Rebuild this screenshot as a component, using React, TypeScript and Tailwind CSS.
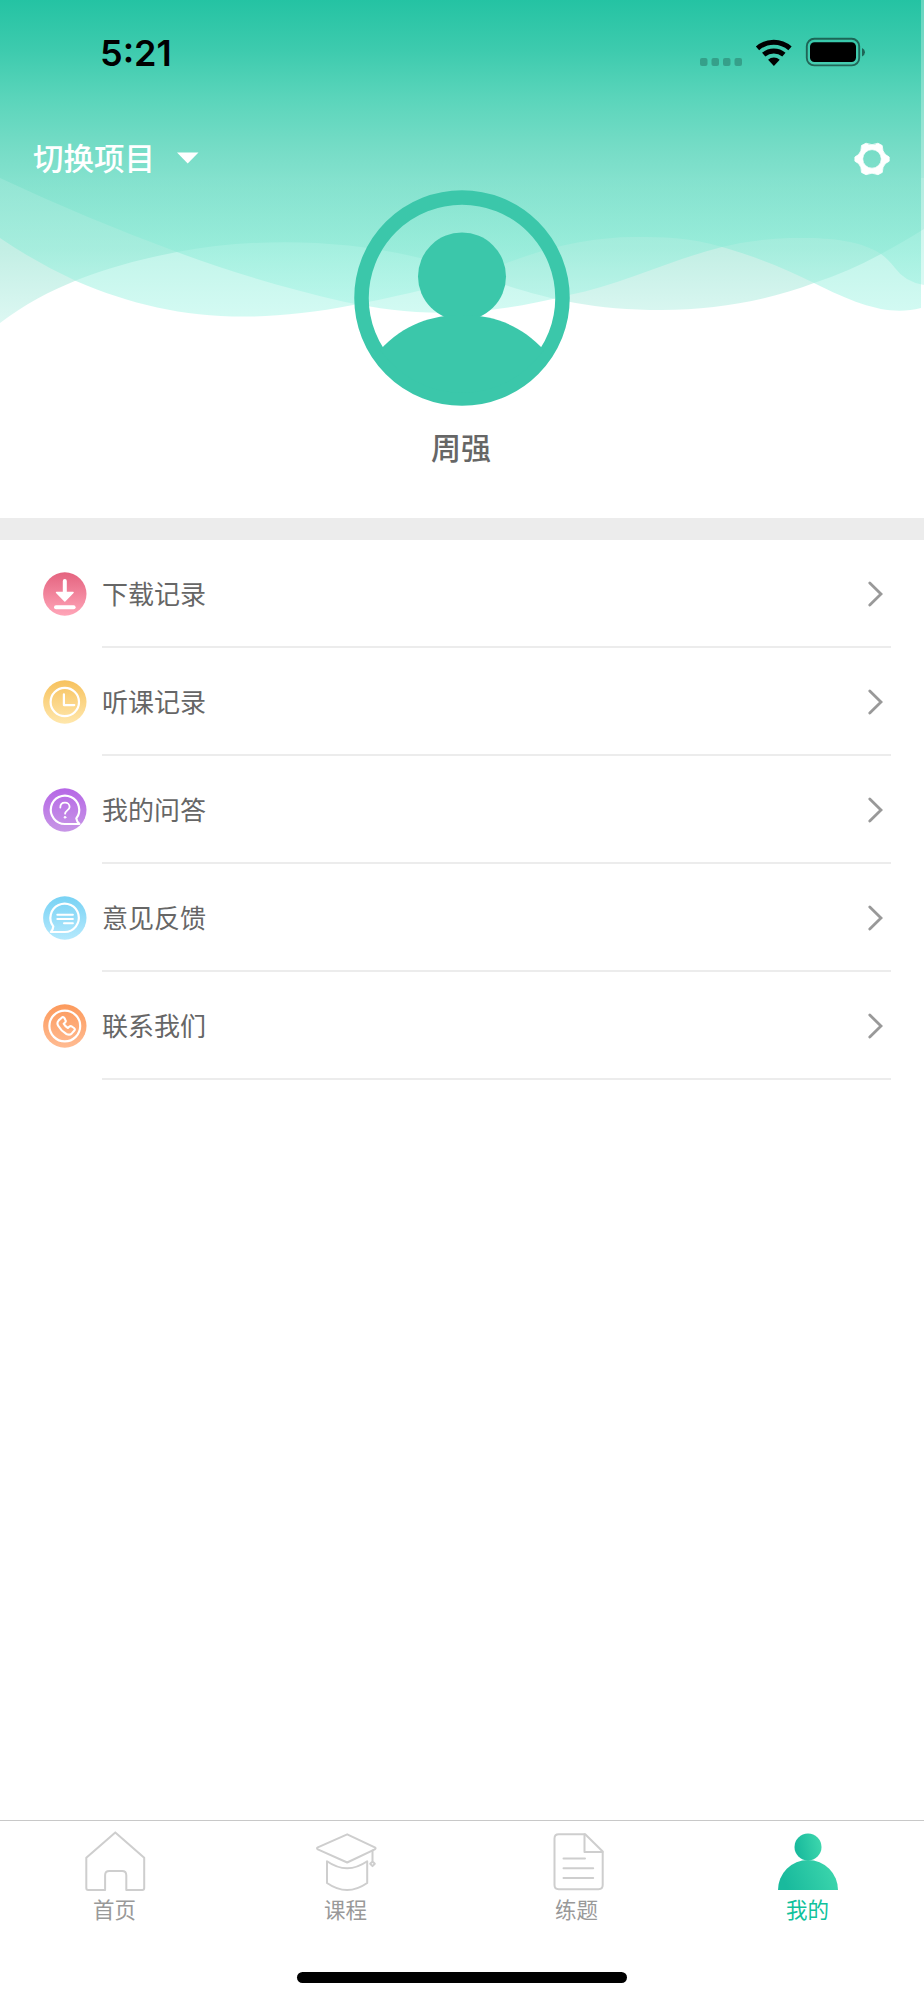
import type { ReactNode } from 'react';

interface MenuItem {
  label: string;
  from: string;
  to: string;
  glyph: ReactNode;
}

interface Tab {
  label: string;
  icon: ReactNode;
  active?: boolean;
}

const MENU: MenuItem[] = [
  {
    label: '下载记录',
    from: '#e4637f',
    to: '#ffa5b8',
    glyph: (
      <>
        <path d="M21.8 9v12" strokeWidth="4" />
        <path d="M13.500 20.500h16.600L21.800 29z" fill="#fff" strokeWidth="1.400" />
        <path d="M13 35.200h17.600" strokeWidth="4" />
      </>
    ),
  },
  {
    label: '听课记录',
    from: '#f7c25e',
    to: '#ffe7ac',
    glyph: (
      <>
        <circle cx="21.800" cy="22" r="14.200" strokeWidth="2.200" />
        <path d="M20.900 14.300v10.800h10.400" strokeWidth="2.200" />
      </>
    ),
  },
  {
    label: '我的问答',
    from: '#b667e6',
    to: '#c796e6',
    glyph: (
      <>
        <path
          d="M33.300 30.400A14.200 14.200 0 1 0 21.800 36h14.600c-1.500-1.100-2.700-3-3.100-5.600z"
          strokeWidth="2.200"
        />
        <path
          d="M17.300 19.600c0-3.300 2.100-5 4.700-5s4.600 1.800 4.600 4.300c0 3.300-4.500 3.600-4.500 6.800"
          strokeWidth="1.800"
        />
        <circle cx="22" cy="29.300" r="0.900" fill="#fff" strokeWidth="1" />
      </>
    ),
  },
  {
    label: '意见反馈',
    from: '#78d2f4',
    to: '#b5e9fd',
    glyph: (
      <>
        <path
          d="M10.300 30.400A14.200 14.200 0 1 1 21.800 36H7.800c1.400-1.100 2.300-3 2.500-5.600z"
          strokeWidth="2.200"
        />
        <path d="M14.300 18.700h15.600M14.300 23h15.600M21 27.300h8.900" strokeWidth="2" />
      </>
    ),
  },
  {
    label: '联系我们',
    from: '#fc9a5c',
    to: '#ffbb92',
    glyph: (
      <>
        <circle cx="21.800" cy="22" r="15.400" strokeWidth="2.200" />
        <path
          d="M19.300 13.200l-3.600 3.200c-1.500 1.500-1.600 3.400-.5 5.400 2 3.600 4.600 6.200 8.200 8.200 2 1 3.900.9 5.400-.6l2.400-2.600c1-1 .8-2-.2-2.800l-2.200-1.500c-1-.6-1.800-.4-2.600.3l-1.300 1.200c-1.600-.8-3.300-2.500-4.200-4.200l1.400-1.300c.8-.8.9-1.600.3-2.500l-1-1.900c-.6-.9-1.400-1.400-2.100-.9z"
          strokeWidth="2.100"
        />
      </>
    ),
  },
];

const TABS: Tab[] = [
  {
    label: '首页',
    icon: (
      <path d="M30.300 1.400 59.200 26.700V57q0 1.900-1.900 1.900H41.300V44.200q0-4.200-4.200-4.200H24.300q-4.200 0-4.200 4.200V58.900H3.200q-1.900 0-1.900-1.900V26.700z" />
    ),
  },
  {
    label: '课程',
    icon: (
      <>
        <path d="M31.200 3.300 58.800 16.300q1.600 1 0 2L31.200 31.500 1.800 18.300q-1.600-1 0-2z" />
        <path d="M11 30.300q20.100 14 40.200 0V52q-20.100 14-40.200 0z" />
        <path d="M56.500 19.500V30.500M56.500 30.500l2.300 2.300-2.300 2.300-2.300-2.300z" />
      </>
    ),
  },
  {
    label: '练题',
    icon: (
      <>
        <path d="M38.200 3.300H11.700Q7.500 3.300 7.500 7.500V54q0 4.200 4.200 4.200H51.500q4.200 0 4.200-4.200V20.500z" />
        <path d="M37.500 3.300V21H55.500M16.500 27.500H38M16.500 37.300H46.200M16.500 47.100H46.200" />
      </>
    ),
  },
  {
    label: '我的',
    active: true,
    icon: (
      <g fill="url(#mine)" stroke="none">
        <circle cx="30" cy="16" r="13.500" />
        <path d="M0 59a30 30 0 0 1 60 0z" />
      </g>
    ),
  },
];

function StatusBar() {
  return (
    <div className="flex h-[106px] items-center justify-between pl-[100px] pr-[57px]">
      <div className="font-['Inter','Liberation_Sans',sans-serif] text-[36px] leading-none font-semibold text-black">
        5:21
      </div>
      <svg width="168" height="32" viewBox="699 37 168 32">
        <g fill="#000" fillOpacity="0.220">
          <rect x="700" y="58" width="7.500" height="8" rx="2" />
          <rect x="711.500" y="58" width="7.500" height="8" rx="2" />
          <rect x="723" y="58" width="7.500" height="8" rx="2" />
          <rect x="734.500" y="58" width="7.500" height="8" rx="2" />
        </g>
        <g fill="none" stroke="#000" strokeWidth="5">
          <path d="M757.500 48.300a24.500 24.500 0 0 1 32.500 0" />
          <path d="M763.700 54.700a15.500 15.500 0 0 1 20.200 0" />
        </g>
        <path d="M773.900 66l-5.800-6.200a8.500 8.500 0 0 1 11.600 0z" />
        <rect
          x="806.800"
          y="38.800"
          width="52.400"
          height="26.600"
          rx="7.500"
          fill="none"
          stroke="#000"
          strokeOpacity="0.500"
          strokeWidth="1.900"
        />
        <rect x="810" y="42.300" width="46" height="19.700" rx="4.500" />
        <path d="M862 48v8.500q3-1.500 3-4.250T862 48z" fillOpacity="0.500" />
      </svg>
    </div>
  );
}

// Three overlapping translucent waves; above the crests they share one opaque gradient
function Waves() {
  return (
    <svg className="absolute inset-0" width="924" height="340" viewBox="0 0 924 340">
      <defs>
        <linearGradient id="mint" gradientUnits="userSpaceOnUse" x1="0" y1="0" x2="0" y2="320">
          <stop offset="0" stopColor="#24c3a3" />
          <stop offset="0.160" stopColor="#3ecbae" />
          <stop offset="0.310" stopColor="#5bd5bb" />
          <stop offset="0.460" stopColor="#75dcc6" />
          <stop offset="0.556" stopColor="#83e1cd" />
          <stop offset="0.556" stopColor="#76dec8" stopOpacity="0.540" />
          <stop offset="0.780" stopColor="#8eecd8" stopOpacity="0.540" />
          <stop offset="1" stopColor="#b0f7ea" stopOpacity="0.540" />
        </linearGradient>
        <linearGradient id="sage" gradientUnits="userSpaceOnUse" x1="0" y1="0" x2="0" y2="320">
          <stop offset="0.556" stopColor="#76dec8" stopOpacity="0.540" />
          <stop offset="0.780" stopColor="#90e1ce" stopOpacity="0.540" />
          <stop offset="1" stopColor="#bdf1e7" stopOpacity="0.540" />
        </linearGradient>
      </defs>
      <path
        fill="url(#sage)"
        d="M0 0H924V229Q905 241 881 254Q848 272 814 283C770 300 715 310 662 310C550 310 500 280 420 258C340 238 250 238 177 252C110 265 50 285 0 323z"
      />
      <path
        fill="url(#mint)"
        d="M0 0H921V308C890 316 860 306 814 283C780 266 750 255 722 247C690 237 660 237 635 237C590 237 545 248 507 263C465 280 420 292 353 305C240 327 160 317 76 281Q35 262 0 238z"
      />
      <path
        fill="url(#mint)"
        d="M0 0H924V285Q905 282 895 268Q888 259 881 254C855 237 815 238 790 238Q755 239 722 247C670 260 620 285 569 295C470 320 410 315 345 302C285 288 230 272 177 252Q85 218 0 178z"
      />
      <rect x="921" width="3" height="290" fill="#fff" fillOpacity="0.300" />
    </svg>
  );
}

function Avatar() {
  return (
    <svg className="mx-auto block" width="216" height="216" viewBox="0 0 216 216" fill="#3bc7aa">
      <circle cx="108" cy="108" r="100.500" fill="none" stroke="#3bc7aa" strokeWidth="14.500" />
      <circle cx="108" cy="86.500" r="44" />
      <path d="M26 160C50 134 78 125 108 125S166 134 190 160A100 100 0 0 1 26 160z" />
    </svg>
  );
}

function Header() {
  return (
    <header className="relative h-[518px]">
      <Waves />
      <div className="relative">
        <StatusBar />
        <div className="flex h-[84px] items-start justify-between pl-[33px] pr-[34px] pt-[29px] text-white">
          <div className="flex items-center gap-[22px]">
            <span className="text-[30.500px] leading-[44px] font-medium">切换项目</span>
            <svg className="mt-[2px]" width="22" height="12" viewBox="0 0 22 12" fill="#fff">
              <path d="M0 .5h21.500L10.700 11.500z" />
            </svg>
          </div>
          <svg
            className="mt-[7px]"
            width="36"
            height="34"
            viewBox="0 0 36 34"
            fill="#fff"
            stroke="#fff"
            strokeWidth="0.800"
            strokeLinejoin="round"
          >
            <path
              fillRule="evenodd"
              d="M12 1.200Q18 4.200 24 1.200L28.200 3.500Q28.200 9.500 31.500 12.600L35.200 15V19.200L31.500 21.500Q28.200 24.800 28.300 30.400L24 32.700Q18 29.700 12 32.700L7.500 30.400Q7.700 24.800 4.500 21.500L.9 19.200V15L4.500 12.600Q7.700 9.500 7.500 3.500zM18 7.600a9.300 9.300 0 1 0 0 18.600a9.300 9.300 0 1 0 0-18.600z"
            />
          </svg>
        </div>
        <Avatar />
        <div className="mt-[18px] pr-[2px] text-center text-[30px] leading-[44px] font-medium text-[#666]">
          周强
        </div>
      </div>
    </header>
  );
}

function MenuRow({ item, id }: { item: MenuItem; id: string }) {
  return (
    <li className="flex h-[108px] pl-[43px] pr-[33px]">
      <svg className="mt-[32px] shrink-0" width="44" height="44" viewBox="0 0 44 44">
        <defs>
          <linearGradient id={id} x1="0" y1="0" x2="0" y2="1">
            <stop offset="0" stopColor={item.from} />
            <stop offset="1" stopColor={item.to} />
          </linearGradient>
        </defs>
        <circle cx="21.800" cy="22" r="21.700" fill={`url(#${id})`} />
        <g fill="none" stroke="#fff" strokeLinecap="round" strokeLinejoin="round">
          {item.glyph}
        </g>
      </svg>
      <div className="ml-[15px] flex flex-1 items-center justify-between border-b-2 border-[#ececec] pr-[8px]">
        <span className="text-[26px] leading-[38px] text-[#666]">{item.label}</span>
        <svg
          className="mt-[2px]"
          width="15"
          height="26"
          viewBox="0 0 15 26"
          fill="none"
          stroke="#999"
          strokeWidth="2.800"
          strokeLinecap="round"
        >
          <path d="M1.800 2 13 13 1.800 24" />
        </svg>
      </div>
    </li>
  );
}

function TabBar() {
  return (
    <nav className="h-[180px] border-t border-[#c8c8c8] pt-[10px]">
      <div className="grid grid-cols-4">
        {TABS.map((tab) => (
          <div key={tab.label} className="flex flex-col items-center">
            <svg
              width="62"
              height="62"
              viewBox="0 0 62 62"
              fill="none"
              stroke="#cecece"
              strokeWidth="2"
              strokeLinejoin="round"
              strokeLinecap="round"
            >
              <defs>
                <linearGradient id="mine" x1="0" y1="0.200" x2="1" y2="0">
                  <stop offset="0" stopColor="#19ba9d" />
                  <stop offset="1" stopColor="#40d9ae" />
                </linearGradient>
              </defs>
              {tab.icon}
            </svg>
            <span
              className={
                tab.active
                  ? 'pr-[2px] text-[21.500px] leading-[32px] text-[#10c29c]'
                  : 'pr-[2px] text-[21.500px] leading-[32px] text-[#999]'
              }
            >
              {tab.label}
            </span>
          </div>
        ))}
      </div>
      <div className="mx-auto mt-[47px] h-[11px] w-[330px] rounded-full bg-black" />
    </nav>
  );
}

export default function App() {
  return (
    <div className="flex h-[2000px] w-[924px] flex-col overflow-hidden bg-white font-['Noto_Sans_CJK_SC',sans-serif]">
      <Header />
      <div className="h-[22px] bg-[#ececec]" />
      <ul className="flex-1">
        {MENU.map((item, i) => (
          <MenuRow key={item.label} item={item} id={`menu-${i}`} />
        ))}
      </ul>
      <TabBar />
    </div>
  );
}
